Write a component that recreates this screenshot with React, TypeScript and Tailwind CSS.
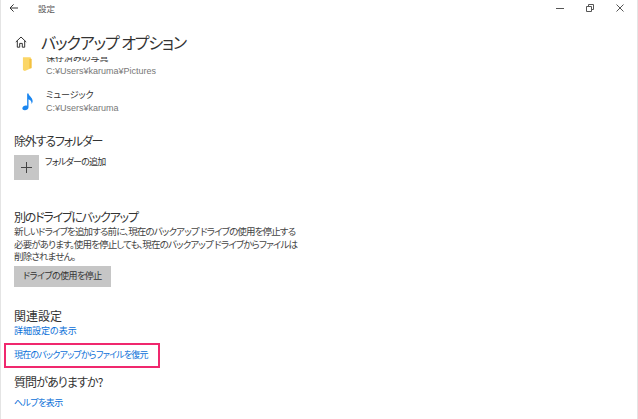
const font = { fontFamily: '"Noto Sans CJK JP", "Noto Sans", sans-serif' };

const Heading = ({ children, className = "" }: { children: string; className?: string }) => (
  <p className={`text-[12px] leading-[16px] text-[#333] whitespace-nowrap ${className}`}>{children}</p>
);

const FolderRow = ({ title, path, icon }: { title: string; path: string; icon: React.ReactNode }) => (
  <div className="flex h-[37px] items-start">
    <div className="flex w-[27px] h-[25px] items-center justify-center">{icon}</div>
    <div className="ml-[5px]">
      <p className="text-[9px] leading-[12px] text-[#333]">{title}</p>
      <p className="text-[9px] leading-[14px] text-[#777] font-['Liberation_Sans']">{path}</p>
    </div>
  </div>
);

export default function App() {
  return (
    <div style={font} className="w-[638px] h-[419px] bg-white overflow-hidden flex flex-col border-x border-[#e4e4e4] [font-feature-settings:'palt']">
      <div className="h-[57px] shrink-0 bg-white">
        <div className="flex items-center h-[16px] pl-[8px]">
          <svg width="10" height="10" viewBox="0 0 10 10" fill="none" stroke="#333" strokeWidth="1">
            <path d="M9 5H1.2M4.6 1.4 1 5l3.6 3.6" />
          </svg>
          <span className="ml-[19px] text-[8.5px] text-[#555]">設定</span>
          <div className="ml-auto flex items-center gap-[22px] pr-[13px]">
            <svg width="8" height="8" viewBox="0 0 8 8" stroke="#555" fill="none"><path d="M0 4.5h8" /></svg>
            <svg width="8" height="8" viewBox="0 0 8 8" stroke="#555" fill="none"><path d="M.5 2.5h5v5h-5zM2.5 2.5v-2h5v5h-2" /></svg>
            <svg width="8" height="8" viewBox="0 0 8 8" stroke="#555" fill="none"><path d="M.5.5l7 7M7.5.5l-7 7" /></svg>
          </div>
        </div>
        <div className="flex items-center h-[28px] mt-[12px] pl-[14px]">
          <svg width="12" height="12" viewBox="0 0 12 12" fill="none" stroke="#333" strokeWidth="1">
            <path d="M.8 6 6 1l5.2 5M2.3 4.8v6.4h2.4V7.4h2.6v3.8h2.4V4.8" />
          </svg>
          <h1 className="ml-[14px] text-[16px] leading-[22px] tracking-[-1.1px] text-[#333] whitespace-nowrap">バックアップ オプション</h1>
        </div>
      </div>

      <div className="flex-1 overflow-hidden">
        <div className="-mt-[5px] pl-[13px] flex flex-col">
          <FolderRow
            title="保存済みの写真"
            path="C:¥Users¥karuma¥Pictures"
            icon={
              <svg width="11" height="15" viewBox="0 0 12 16">
                <path d="M1 0h8l1 1v11l-7 3-2-1z" fill="#fbd667" />
                <path d="M8 2h2.5v10H8z" fill="#f3c13f" />
              </svg>
            }
          />
          <FolderRow
            title="ミュージック"
            path="C:¥Users¥karuma"
            icon={
              <svg width="12" height="18" viewBox="0 0 14 20" fill="#1a86f0">
                <path d="M6 0h1.6c.4 3 4.6 4.4 4.8 8.6.1 1.5-.5 2.8-1.2 3.6.3-3-1.6-4.6-3.6-5.4V16c0 2.200-2.200 3.600-4.300 3.600C1.400 19.600.4 18.600.4 17.300c0-2 2.200-3.300 4-3.300.6 0 1.100.1 1.600.3z" />
              </svg>
            }
          />

          <Heading className="mt-[7px] tracking-[-1.2px]">除外するフォルダー</Heading>
          <div className="flex mt-[6px]">
            <div className="w-[25px] h-[25px] bg-[#c6c6c6] flex items-center justify-center">
              <svg width="11" height="11" viewBox="0 0 11 11" stroke="#444" strokeWidth="1"><path d="M5.5 0v11M0 5.500h11" /></svg>
            </div>
            <p className="ml-[6px] mt-[1px] text-[9px] leading-[12px] tracking-[-0.8px] text-[#333]">フォルダーの追加</p>
          </div>

          <Heading className="mt-[29px] tracking-[-1.2px]">別のドライブにバックアップ</Heading>
          <p className="w-[290px] text-[9.5px] leading-[12.5px] tracking-[-0.85px] text-[#444] whitespace-nowrap">
            新しいドライブを追加する前に、現在のバックアップ ドライブの使用を停止する
            <br />
            必要があります。使用を停止しても、現在のバックアップ ドライブからファイルは
            <br />
            削除されません。
          </p>
          <div className="mt-[3px] w-[97px] h-[21px] bg-[#c6c6c6] flex items-center justify-center text-[9px] tracking-[-0.5px] text-[#333]">
            ドライブの使用を停止
          </div>

          <Heading className="mt-[21px]">関連設定</Heading>
          <a className="text-[9px] leading-[14px] text-[#0a6fd8]">詳細設定の表示</a>
          <div className="-ml-[10px] mt-[5px] w-[156px] h-[25px] border-2 border-[#f0286e] flex items-center pl-[8px]">
            <a className="text-[9px] leading-[14px] tracking-[-0.8px] text-[#0a6fd8] whitespace-nowrap">現在のバックアップからファイルを復元</a>
          </div>
          <Heading className="mt-[6px] tracking-[-0.9px]">質問がありますか?</Heading>
          <a className="mt-[6px] text-[9px] leading-[14px] tracking-[-0.6px] text-[#0a6fd8]">ヘルプを表示</a>
        </div>
      </div>
    </div>
  );
}
